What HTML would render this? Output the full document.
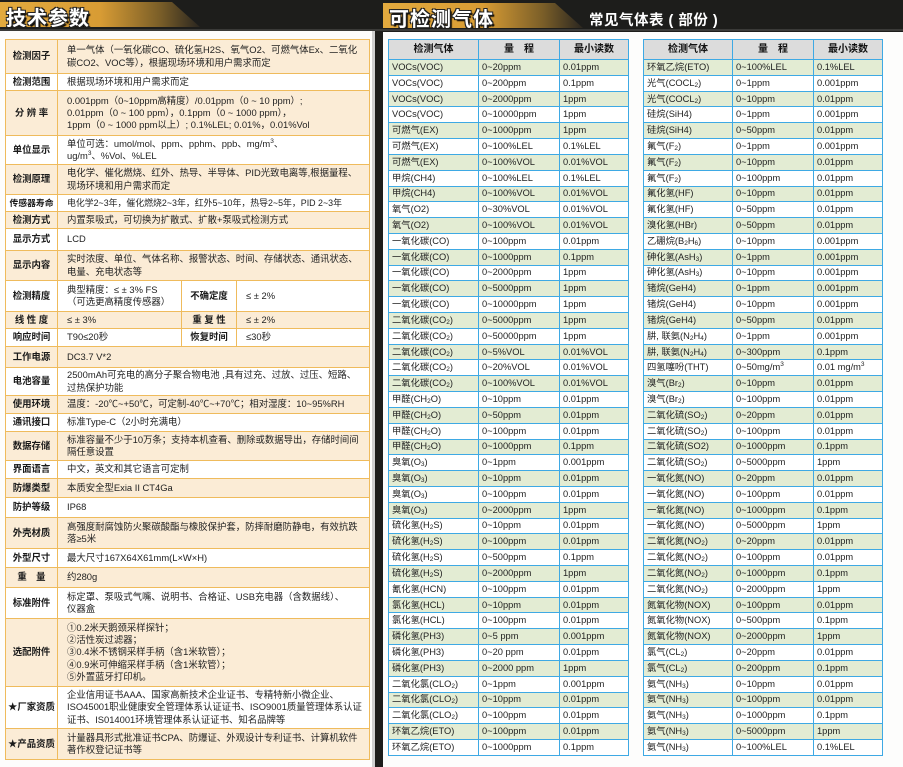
<!DOCTYPE html>
<html><head><meta charset="utf-8"><style>
*{margin:0;padding:0;box-sizing:border-box}
body{width:903px;height:767px;background:#1d1d1b;position:relative;overflow:hidden;font-family:"Liberation Sans","Noto Sans CJK SC",sans-serif;color:#222}
.panel{position:absolute;background:#fdfdfc}
.banner{position:absolute;height:25px;background:linear-gradient(90deg,#e3aa3e 0%,#d89c34 50%,#7a5e28 80%,#2a2620 100%);clip-path:polygon(0 0,calc(100% - 28px) 0,100% 100%,0 100%)}
.banner span{position:absolute;left:6px;top:0px;font-size:20px;font-weight:bold;color:#fff;letter-spacing:1px;text-shadow:-1px -1px 0 #222,1px -1px 0 #222,-1px 1px 0 #222,1px 1px 0 #222,2px 2px 1px #000}
table{border-collapse:collapse;table-layout:fixed;position:absolute}
.lt{left:5px;top:39px;width:364px;font-size:9.4px;line-height:12.3px}
.lt td{border:1.5px solid #efbb5c;padding:0 5px 0 9px;vertical-align:middle}
.lt td.l{font-weight:bold;text-align:center;padding:0;color:#1a1a1a}
.lt tr.c td{background:#fbecd6}
.lt tr.w td{background:#fff}
.rt{top:39px;width:240px;font-size:9.3px}
.rt td,.rt th{border:1.5px solid #3ea9e4;padding:0 0 0 3px;height:15.82px;white-space:nowrap;overflow:hidden;line-height:11px}
.rt th{background:#dcdcdc;height:20px;text-align:center;font-size:10px;padding:0;color:#111}
.rt tr:nth-child(even) td{background:#e3ecd3}
.rt tr:nth-child(odd) td{background:#fff}
sub,sup{font-size:6.5px;line-height:0}
sub{vertical-align:-1px}
</style></head><body>
<div class="panel" style="left:0;top:31px;width:372px;height:736px"></div>
<div style="position:absolute;left:372px;top:31px;width:3px;height:736px;background:#cfcfcf"></div>
<div class="panel" style="left:383px;top:32px;width:520px;height:735px"></div>
<div style="position:absolute;left:0;top:29px;width:903px;height:2px;background:#3a3a38"></div>
<div class="banner" style="left:0;top:2px;width:200px"><span>技术参数</span></div>
<div class="banner" style="left:383px;top:3px;width:200px"><span>可检测气体</span></div>
<div style="position:absolute;left:589px;top:9px;font-size:14.5px;font-weight:bold;color:#fff;letter-spacing:.5px">常见气体表 ( 部份 )</div>

<table class="lt">
<colgroup><col style="width:52px"><col style="width:124px"><col style="width:55px"><col style="width:133px"></colgroup>
<tr class="c" style="height:34px"><td class="l">检测因子</td><td colspan="3">单一气体（一氧化碳CO、硫化氢H2S、氧气O2、可燃气体Ex、二氧化碳CO2、VOC等），根据现场环境和用户需求而定</td></tr>
<tr class="w" style="height:17px"><td class="l">检测范围</td><td colspan="3">根据现场环境和用户需求而定</td></tr>
<tr class="c" style="height:45px"><td class="l">分 辨 率</td><td colspan="3">0.001ppm（0~10ppm高精度）/0.01ppm（0 ~ 10 ppm）;<br>0.01ppm（0 ~ 100 ppm），0.1ppm（0 ~ 1000 ppm），<br>1ppm（0 ~ 1000 ppm以上）; 0.1%LEL; 0.01%，0.01%Vol</td></tr>
<tr class="w" style="height:29px"><td class="l">单位显示</td><td colspan="3">单位可选：umol/mol、ppm、pphm、ppb、mg/m<sup>3</sup>、<br>ug/m<sup>3</sup>、%Vol、%LEL</td></tr>
<tr class="c" style="height:30px"><td class="l">检测原理</td><td colspan="3">电化学、催化燃烧、红外、热导、半导体、PID光致电离等,根据量程、现场环境和用户需求而定</td></tr>
<tr class="w" style="height:17px"><td class="l" style="font-size:8.8px">传感器寿命</td><td colspan="3" style="font-size:8.9px">电化学2~3年，催化燃烧2~3年，红外5~10年，热导2~5年，PID 2~3年</td></tr>
<tr class="c" style="height:17px"><td class="l">检测方式</td><td colspan="3">内置泵吸式，可切换为扩散式、扩散+泵吸式检测方式</td></tr>
<tr class="w" style="height:22px"><td class="l">显示方式</td><td colspan="3">LCD</td></tr>
<tr class="c" style="height:30px"><td class="l">显示内容</td><td colspan="3">实时浓度、单位、气体名称、报警状态、时间、存储状态、通讯状态、电量、充电状态等</td></tr>
<tr class="w" style="height:31px"><td class="l">检测精度</td><td>典型精度：≤ ± 3% FS<br>（可选更高精度传感器）</td><td class="l">不确定度</td><td>≤ ± 2%</td></tr>
<tr class="c" style="height:17px"><td class="l">线 性 度</td><td>≤ ± 3%</td><td class="l">重 复 性</td><td>≤ ± 2%</td></tr>
<tr class="w" style="height:18px"><td class="l">响应时间</td><td>T90≤20秒</td><td class="l">恢复时间</td><td>≤30秒</td></tr>
<tr class="c" style="height:21px"><td class="l">工作电源</td><td colspan="3">DC3.7 V*2</td></tr>
<tr class="w" style="height:28px"><td class="l">电池容量</td><td colspan="3">2500mAh可充电的高分子聚合物电池 ,具有过充、过放、过压、短路、过热保护功能</td></tr>
<tr class="c" style="height:18px"><td class="l">使用环境</td><td colspan="3">温度：-20℃~+50℃，可定制-40℃~+70℃；相对湿度：10~95%RH</td></tr>
<tr class="w" style="height:18px"><td class="l">通讯接口</td><td colspan="3">标准Type-C（2小时充满电）</td></tr>
<tr class="c" style="height:29px"><td class="l">数据存储</td><td colspan="3">标准容量不少于10万条；支持本机查看、删除或数据导出，存储时间间隔任意设置</td></tr>
<tr class="w" style="height:18px"><td class="l">界面语言</td><td colspan="3">中文，英文和其它语言可定制</td></tr>
<tr class="c" style="height:19px"><td class="l">防爆类型</td><td colspan="3">本质安全型Exia II CT4Ga</td></tr>
<tr class="w" style="height:20px"><td class="l">防护等级</td><td colspan="3">IP68</td></tr>
<tr class="c" style="height:31px"><td class="l">外壳材质</td><td colspan="3">高强度耐腐蚀防火聚碳酸酯与橡胶保护套，防摔耐磨防静电，有效抗跌落≥5米</td></tr>
<tr class="w" style="height:19px"><td class="l">外型尺寸</td><td colspan="3">最大尺寸167X64X61mm(L×W×H)</td></tr>
<tr class="c" style="height:20px"><td class="l">重　量</td><td colspan="3">约280g</td></tr>
<tr class="w" style="height:31px"><td class="l">标准附件</td><td colspan="3">标定罩、泵吸式气嘴、说明书、合格证、USB充电器（含数据线）、<br>仪器盒</td></tr>
<tr class="c" style="height:68px"><td class="l">选配附件</td><td colspan="3">①0.2米天鹅颈采样探针；<br>②活性炭过滤器；<br>③0.4米不锈钢采样手柄（含1米软管）；<br>④0.9米可伸缩采样手柄（含1米软管）；<br>⑤外置蓝牙打印机。</td></tr>
<tr class="w" style="height:42px"><td class="l">★厂家资质</td><td colspan="3">企业信用证书AAA、国家高新技术企业证书、专精特新小微企业、ISO45001职业健康安全管理体系认证证书、ISO9001质量管理体系认证证书、IS014001环境管理体系认证证书、知名品牌等</td></tr>
<tr class="c" style="height:31px"><td class="l">★产品资质</td><td colspan="3">计量器具形式批准证书CPA、防爆证、外观设计专利证书、计算机软件著作权登记证书等</td></tr>
</table>

<table class="rt" style="left:388px">
<colgroup><col style="width:90px"><col style="width:81px"><col style="width:69px"></colgroup>
<tr><th>检测气体</th><th>量　程</th><th>最小读数</th></tr>
<tr><td>VOCs(VOC)</td><td>0~20ppm</td><td>0.01ppm</td></tr>
<tr><td>VOCs(VOC)</td><td>0~200ppm</td><td>0.1ppm</td></tr>
<tr><td>VOCs(VOC)</td><td>0~2000ppm</td><td>1ppm</td></tr>
<tr><td>VOCs(VOC)</td><td>0~10000ppm</td><td>1ppm</td></tr>
<tr><td>可燃气(EX)</td><td>0~1000ppm</td><td>1ppm</td></tr>
<tr><td>可燃气(EX)</td><td>0~100%LEL</td><td>0.1%LEL</td></tr>
<tr><td>可燃气(EX)</td><td>0~100%VOL</td><td>0.01%VOL</td></tr>
<tr><td>甲烷(CH4)</td><td>0~100%LEL</td><td>0.1%LEL</td></tr>
<tr><td>甲烷(CH4)</td><td>0~100%VOL</td><td>0.01%VOL</td></tr>
<tr><td>氧气(O2)</td><td>0~30%VOL</td><td>0.01%VOL</td></tr>
<tr><td>氧气(O2)</td><td>0~100%VOL</td><td>0.01%VOL</td></tr>
<tr><td>一氧化碳(CO)</td><td>0~100ppm</td><td>0.01ppm</td></tr>
<tr><td>一氧化碳(CO)</td><td>0~1000ppm</td><td>0.1ppm</td></tr>
<tr><td>一氧化碳(CO)</td><td>0~2000ppm</td><td>1ppm</td></tr>
<tr><td>一氧化碳(CO)</td><td>0~5000ppm</td><td>1ppm</td></tr>
<tr><td>一氧化碳(CO)</td><td>0~10000ppm</td><td>1ppm</td></tr>
<tr><td>二氧化碳(CO<sub>2</sub>)</td><td>0~5000ppm</td><td>1ppm</td></tr>
<tr><td>二氧化碳(CO<sub>2</sub>)</td><td>0~50000ppm</td><td>1ppm</td></tr>
<tr><td>二氧化碳(CO<sub>2</sub>)</td><td>0~5%VOL</td><td>0.01%VOL</td></tr>
<tr><td>二氧化碳(CO<sub>2</sub>)</td><td>0~20%VOL</td><td>0.01%VOL</td></tr>
<tr><td>二氧化碳(CO<sub>2</sub>)</td><td>0~100%VOL</td><td>0.01%VOL</td></tr>
<tr><td>甲醛(CH<sub>2</sub>O)</td><td>0~10ppm</td><td>0.01ppm</td></tr>
<tr><td>甲醛(CH<sub>2</sub>O)</td><td>0~50ppm</td><td>0.01ppm</td></tr>
<tr><td>甲醛(CH<sub>2</sub>O)</td><td>0~100ppm</td><td>0.01ppm</td></tr>
<tr><td>甲醛(CH<sub>2</sub>O)</td><td>0~1000ppm</td><td>0.1ppm</td></tr>
<tr><td>臭氧(O<sub>3</sub>)</td><td>0~1ppm</td><td>0.001ppm</td></tr>
<tr><td>臭氧(O<sub>3</sub>)</td><td>0~10ppm</td><td>0.01ppm</td></tr>
<tr><td>臭氧(O<sub>3</sub>)</td><td>0~100ppm</td><td>0.01ppm</td></tr>
<tr><td>臭氧(O<sub>3</sub>)</td><td>0~2000ppm</td><td>1ppm</td></tr>
<tr><td>硫化氢(H<sub>2</sub>S)</td><td>0~10ppm</td><td>0.01ppm</td></tr>
<tr><td>硫化氢(H<sub>2</sub>S)</td><td>0~100ppm</td><td>0.01ppm</td></tr>
<tr><td>硫化氢(H<sub>2</sub>S)</td><td>0~500ppm</td><td>0.1ppm</td></tr>
<tr><td>硫化氢(H<sub>2</sub>S)</td><td>0~2000ppm</td><td>1ppm</td></tr>
<tr><td>氰化氢(HCN)</td><td>0~100ppm</td><td>0.01ppm</td></tr>
<tr><td>氯化氢(HCL)</td><td>0~10ppm</td><td>0.01ppm</td></tr>
<tr><td>氯化氢(HCL)</td><td>0~100ppm</td><td>0.01ppm</td></tr>
<tr><td>磷化氢(PH3)</td><td>0~5 ppm</td><td>0.001ppm</td></tr>
<tr><td>磷化氢(PH3)</td><td>0~20 ppm</td><td>0.01ppm</td></tr>
<tr><td>磷化氢(PH3)</td><td>0~2000 ppm</td><td>1ppm</td></tr>
<tr><td>二氧化氯(CLO<sub>2</sub>)</td><td>0~1ppm</td><td>0.001ppm</td></tr>
<tr><td>二氧化氯(CLO<sub>2</sub>)</td><td>0~10ppm</td><td>0.01ppm</td></tr>
<tr><td>二氧化氯(CLO<sub>2</sub>)</td><td>0~100ppm</td><td>0.01ppm</td></tr>
<tr><td>环氧乙烷(ETO)</td><td>0~100ppm</td><td>0.01ppm</td></tr>
<tr><td>环氧乙烷(ETO)</td><td>0~1000ppm</td><td>0.1ppm</td></tr>
</table>

<table class="rt" style="left:643px;width:239px">
<colgroup><col style="width:89px"><col style="width:81px"><col style="width:69px"></colgroup>
<tr><th>检测气体</th><th>量　程</th><th>最小读数</th></tr>
<tr><td>环氧乙烷(ETO)</td><td>0~100%LEL</td><td>0.1%LEL</td></tr>
<tr><td>光气(COCL<sub>2</sub>)</td><td>0~1ppm</td><td>0.001ppm</td></tr>
<tr><td>光气(COCL<sub>2</sub>)</td><td>0~10ppm</td><td>0.01ppm</td></tr>
<tr><td>硅烷(SiH4)</td><td>0~1ppm</td><td>0.001ppm</td></tr>
<tr><td>硅烷(SiH4)</td><td>0~50ppm</td><td>0.01ppm</td></tr>
<tr><td>氟气(F<sub>2</sub>)</td><td>0~1ppm</td><td>0.001ppm</td></tr>
<tr><td>氟气(F<sub>2</sub>)</td><td>0~10ppm</td><td>0.01ppm</td></tr>
<tr><td>氟气(F<sub>2</sub>)</td><td>0~100ppm</td><td>0.01ppm</td></tr>
<tr><td>氟化氢(HF)</td><td>0~10ppm</td><td>0.01ppm</td></tr>
<tr><td>氟化氢(HF)</td><td>0~50ppm</td><td>0.01ppm</td></tr>
<tr><td>溴化氢(HBr)</td><td>0~50ppm</td><td>0.01ppm</td></tr>
<tr><td>乙硼烷(B<sub>2</sub>H<sub>6</sub>)</td><td>0~10ppm</td><td>0.001ppm</td></tr>
<tr><td>砷化氢(AsH<sub>3</sub>)</td><td>0~1ppm</td><td>0.001ppm</td></tr>
<tr><td>砷化氢(AsH<sub>3</sub>)</td><td>0~10ppm</td><td>0.001ppm</td></tr>
<tr><td>锗烷(GeH4)</td><td>0~1ppm</td><td>0.001ppm</td></tr>
<tr><td>锗烷(GeH4)</td><td>0~10ppm</td><td>0.001ppm</td></tr>
<tr><td>锗烷(GeH4)</td><td>0~50ppm</td><td>0.01ppm</td></tr>
<tr><td>肼, 联氨(N<sub>2</sub>H<sub>4</sub>)</td><td>0~1ppm</td><td>0.001ppm</td></tr>
<tr><td>肼, 联氨(N<sub>2</sub>H<sub>4</sub>)</td><td>0~300ppm</td><td>0.1ppm</td></tr>
<tr><td>四氢噻吩(THT)</td><td>0~50mg/m<sup>3</sup></td><td>0.01 mg/m<sup>3</sup></td></tr>
<tr><td>溴气(Br<sub>2</sub>)</td><td>0~10ppm</td><td>0.01ppm</td></tr>
<tr><td>溴气(Br<sub>2</sub>)</td><td>0~100ppm</td><td>0.01ppm</td></tr>
<tr><td>二氧化硫(SO<sub>2</sub>)</td><td>0~20ppm</td><td>0.01ppm</td></tr>
<tr><td>二氧化硫(SO<sub>2</sub>)</td><td>0~100ppm</td><td>0.01ppm</td></tr>
<tr><td>二氧化硫(SO2)</td><td>0~1000ppm</td><td>0.1ppm</td></tr>
<tr><td>二氧化硫(SO<sub>2</sub>)</td><td>0~5000ppm</td><td>1ppm</td></tr>
<tr><td>一氧化氮(NO)</td><td>0~20ppm</td><td>0.01ppm</td></tr>
<tr><td>一氧化氮(NO)</td><td>0~100ppm</td><td>0.01ppm</td></tr>
<tr><td>一氧化氮(NO)</td><td>0~1000ppm</td><td>0.1ppm</td></tr>
<tr><td>一氧化氮(NO)</td><td>0~5000ppm</td><td>1ppm</td></tr>
<tr><td>二氧化氮(NO<sub>2</sub>)</td><td>0~20ppm</td><td>0.01ppm</td></tr>
<tr><td>二氧化氮(NO<sub>2</sub>)</td><td>0~100ppm</td><td>0.01ppm</td></tr>
<tr><td>二氧化氮(NO<sub>2</sub>)</td><td>0~1000ppm</td><td>0.1ppm</td></tr>
<tr><td>二氧化氮(NO<sub>2</sub>)</td><td>0~2000ppm</td><td>1ppm</td></tr>
<tr><td>氮氧化物(NOX)</td><td>0~100ppm</td><td>0.01ppm</td></tr>
<tr><td>氮氧化物(NOX)</td><td>0~500ppm</td><td>0.1ppm</td></tr>
<tr><td>氮氧化物(NOX)</td><td>0~2000ppm</td><td>1ppm</td></tr>
<tr><td>氯气(CL<sub>2</sub>)</td><td>0~20ppm</td><td>0.01ppm</td></tr>
<tr><td>氯气(CL<sub>2</sub>)</td><td>0~200ppm</td><td>0.1ppm</td></tr>
<tr><td>氨气(NH<sub>3</sub>)</td><td>0~10ppm</td><td>0.01ppm</td></tr>
<tr><td>氨气(NH<sub>3</sub>)</td><td>0~100ppm</td><td>0.01ppm</td></tr>
<tr><td>氨气(NH<sub>3</sub>)</td><td>0~1000ppm</td><td>0.1ppm</td></tr>
<tr><td>氨气(NH<sub>3</sub>)</td><td>0~5000ppm</td><td>1ppm</td></tr>
<tr><td>氨气(NH<sub>3</sub>)</td><td>0~100%LEL</td><td>0.1%LEL</td></tr>
</table>
</body></html>
